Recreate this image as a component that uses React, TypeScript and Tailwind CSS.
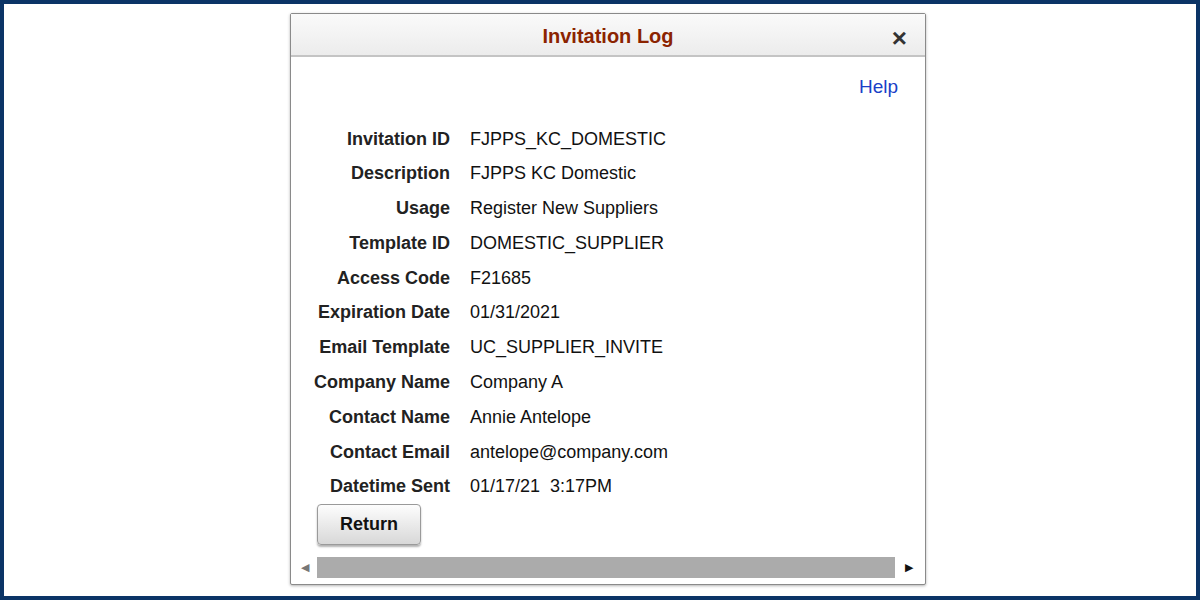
const rows: [string, string][] = [
  ['Invitation ID', 'FJPPS_KC_DOMESTIC'],
  ['Description', 'FJPPS KC Domestic'],
  ['Usage', 'Register New Suppliers'],
  ['Template ID', 'DOMESTIC_SUPPLIER'],
  ['Access Code', 'F21685'],
  ['Expiration Date', '01/31/2021'],
  ['Email Template', 'UC_SUPPLIER_INVITE'],
  ['Company Name', 'Company A'],
  ['Contact Name', 'Annie Antelope'],
  ['Contact Email', 'antelope@company.com'],
  ['Datetime Sent', '01/17/21\u00a0\u00a03:17PM'],
];

export default function App() {
  return (
    <div
      className="w-[1200px] h-[600px] border-4 border-[#0b3466] bg-white flex pl-[286px] pt-[9px]"
      style={{ fontFamily: '"Liberation Sans", Arial, sans-serif' }}
    >
      <div className="w-[636px] h-[572px] border border-[#8a8a8a] rounded-[2px] shadow-[0_1px_3px_rgba(0,0,0,0.3)] flex flex-col bg-white">
        <div className="h-[43px] shrink-0 bg-gradient-to-b from-[#fafafa] to-[#ececec] border-b-2 border-[#c4c4c4] flex items-center justify-center relative pt-[3px]">
          <span className="text-[20px] font-bold text-[#8b2300]">Invitation Log</span>
          <span className="absolute right-[18px] top-[5px] text-[26px] font-bold text-[#333]">×</span>
        </div>
        <div className="flex-1 flex flex-col">
          <div className="flex justify-end pr-[27px] pt-[16px] text-[19px] text-[#1a3fc7]">Help</div>
          <div className="mt-[26px] flex flex-col gap-[12.8px]">
            {rows.map(([k, v]) => (
              <div key={k} className="flex items-center text-[18px] leading-[22px] text-[#111]">
                <div className="w-[159px] text-right font-bold text-[#222]">{k}</div>
                <div className="ml-[20px]">{v}</div>
              </div>
            ))}
          </div>
          <div className="pl-[26px] mt-[7px]">
            <button className="w-[104px] h-[41px] rounded-[4px] border border-[#9a9a9a] bg-gradient-to-b from-[#fdfdfd] to-[#d8d8d8] shadow-[0_2px_2px_rgba(0,0,0,0.3)] text-[18px] font-bold text-[#111]">
              Return
            </button>
          </div>
          <div className="mt-auto mb-[5px] h-[23px] mx-[2px] flex items-center">
            <div className="w-[24px] flex justify-center text-[#777] text-[11px]">◀</div>
            <div className="flex-1 h-[21px] bg-[#ababab]" />
            <div className="w-[28px] flex justify-center text-[#111] text-[11px]">▶</div>
          </div>
        </div>
      </div>
    </div>
  );
}
